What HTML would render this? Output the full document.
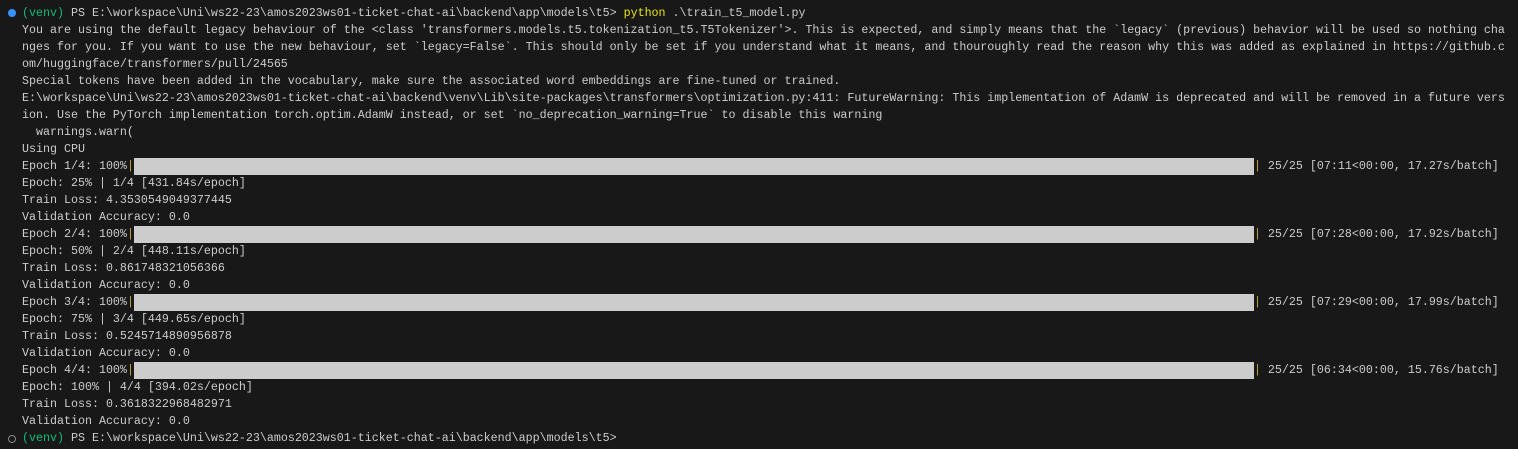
<!DOCTYPE html>
<html><head><meta charset="utf-8"><style>
html,body{margin:0;padding:0;background:#181818;width:1518px;height:449px;overflow:hidden}
#t{position:absolute;left:22px;top:4.5px;font-family:"Liberation Mono",monospace;font-size:11.67px;line-height:17.04px;color:#cccccc;white-space:pre}
.l{height:17.04px}
.g{color:#0dbc79}
.y{color:#e5e510}
.bar{display:inline-block;width:1120px;height:17px;background:#cccccc;vertical-align:top}
.o{color:#c8a030}
.dot{position:absolute;left:8px;width:8px;height:8px;border-radius:50%}
</style></head><body>
<div class="dot" style="top:9px;background:#3794ff"></div>
<div class="dot" style="top:435px;border:1px solid #888;width:6px;height:6px"></div>
<div id="t"><div class="l"><span class="g">(venv)</span> PS E:\workspace\Uni\ws22-23\amos2023ws01-ticket-chat-ai\backend\app\models\t5&gt; <span class="y">python</span> .\train_t5_model.py</div><div class="l">You are using the default legacy behaviour of the &lt;class 'transformers.models.t5.tokenization_t5.T5Tokenizer'&gt;. This is expected, and simply means that the `legacy` (previous) behavior will be used so nothing cha</div><div class="l">nges for you. If you want to use the new behaviour, set `legacy=False`. This should only be set if you understand what it means, and thouroughly read the reason why this was added as explained in https://github.c</div><div class="l">om/huggingface/transformers/pull/24565</div><div class="l">Special tokens have been added in the vocabulary, make sure the associated word embeddings are fine-tuned or trained.</div><div class="l">E:\workspace\Uni\ws22-23\amos2023ws01-ticket-chat-ai\backend\venv\Lib\site-packages\transformers\optimization.py:411: FutureWarning: This implementation of AdamW is deprecated and will be removed in a future vers</div><div class="l">ion. Use the PyTorch implementation torch.optim.AdamW instead, or set `no_deprecation_warning=True` to disable this warning</div><div class="l">  warnings.warn(</div><div class="l">Using CPU</div><div class="l">Epoch 1/4: 100%<span class="o">|</span><span class="bar"></span><span class="o">|</span> 25/25 [07:11&lt;00:00, 17.27s/batch]</div><div class="l">Epoch: 25% | 1/4 [431.84s/epoch]</div><div class="l">Train Loss: 4.3530549049377445</div><div class="l">Validation Accuracy: 0.0</div><div class="l">Epoch 2/4: 100%<span class="o">|</span><span class="bar"></span><span class="o">|</span> 25/25 [07:28&lt;00:00, 17.92s/batch]</div><div class="l">Epoch: 50% | 2/4 [448.11s/epoch]</div><div class="l">Train Loss: 0.861748321056366</div><div class="l">Validation Accuracy: 0.0</div><div class="l">Epoch 3/4: 100%<span class="o">|</span><span class="bar"></span><span class="o">|</span> 25/25 [07:29&lt;00:00, 17.99s/batch]</div><div class="l">Epoch: 75% | 3/4 [449.65s/epoch]</div><div class="l">Train Loss: 0.5245714890956878</div><div class="l">Validation Accuracy: 0.0</div><div class="l">Epoch 4/4: 100%<span class="o">|</span><span class="bar"></span><span class="o">|</span> 25/25 [06:34&lt;00:00, 15.76s/batch]</div><div class="l">Epoch: 100% | 4/4 [394.02s/epoch]</div><div class="l">Train Loss: 0.3618322968482971</div><div class="l">Validation Accuracy: 0.0</div><div class="l"><span class="g">(venv)</span> PS E:\workspace\Uni\ws22-23\amos2023ws01-ticket-chat-ai\backend\app\models\t5&gt;</div></div>
</body></html>
